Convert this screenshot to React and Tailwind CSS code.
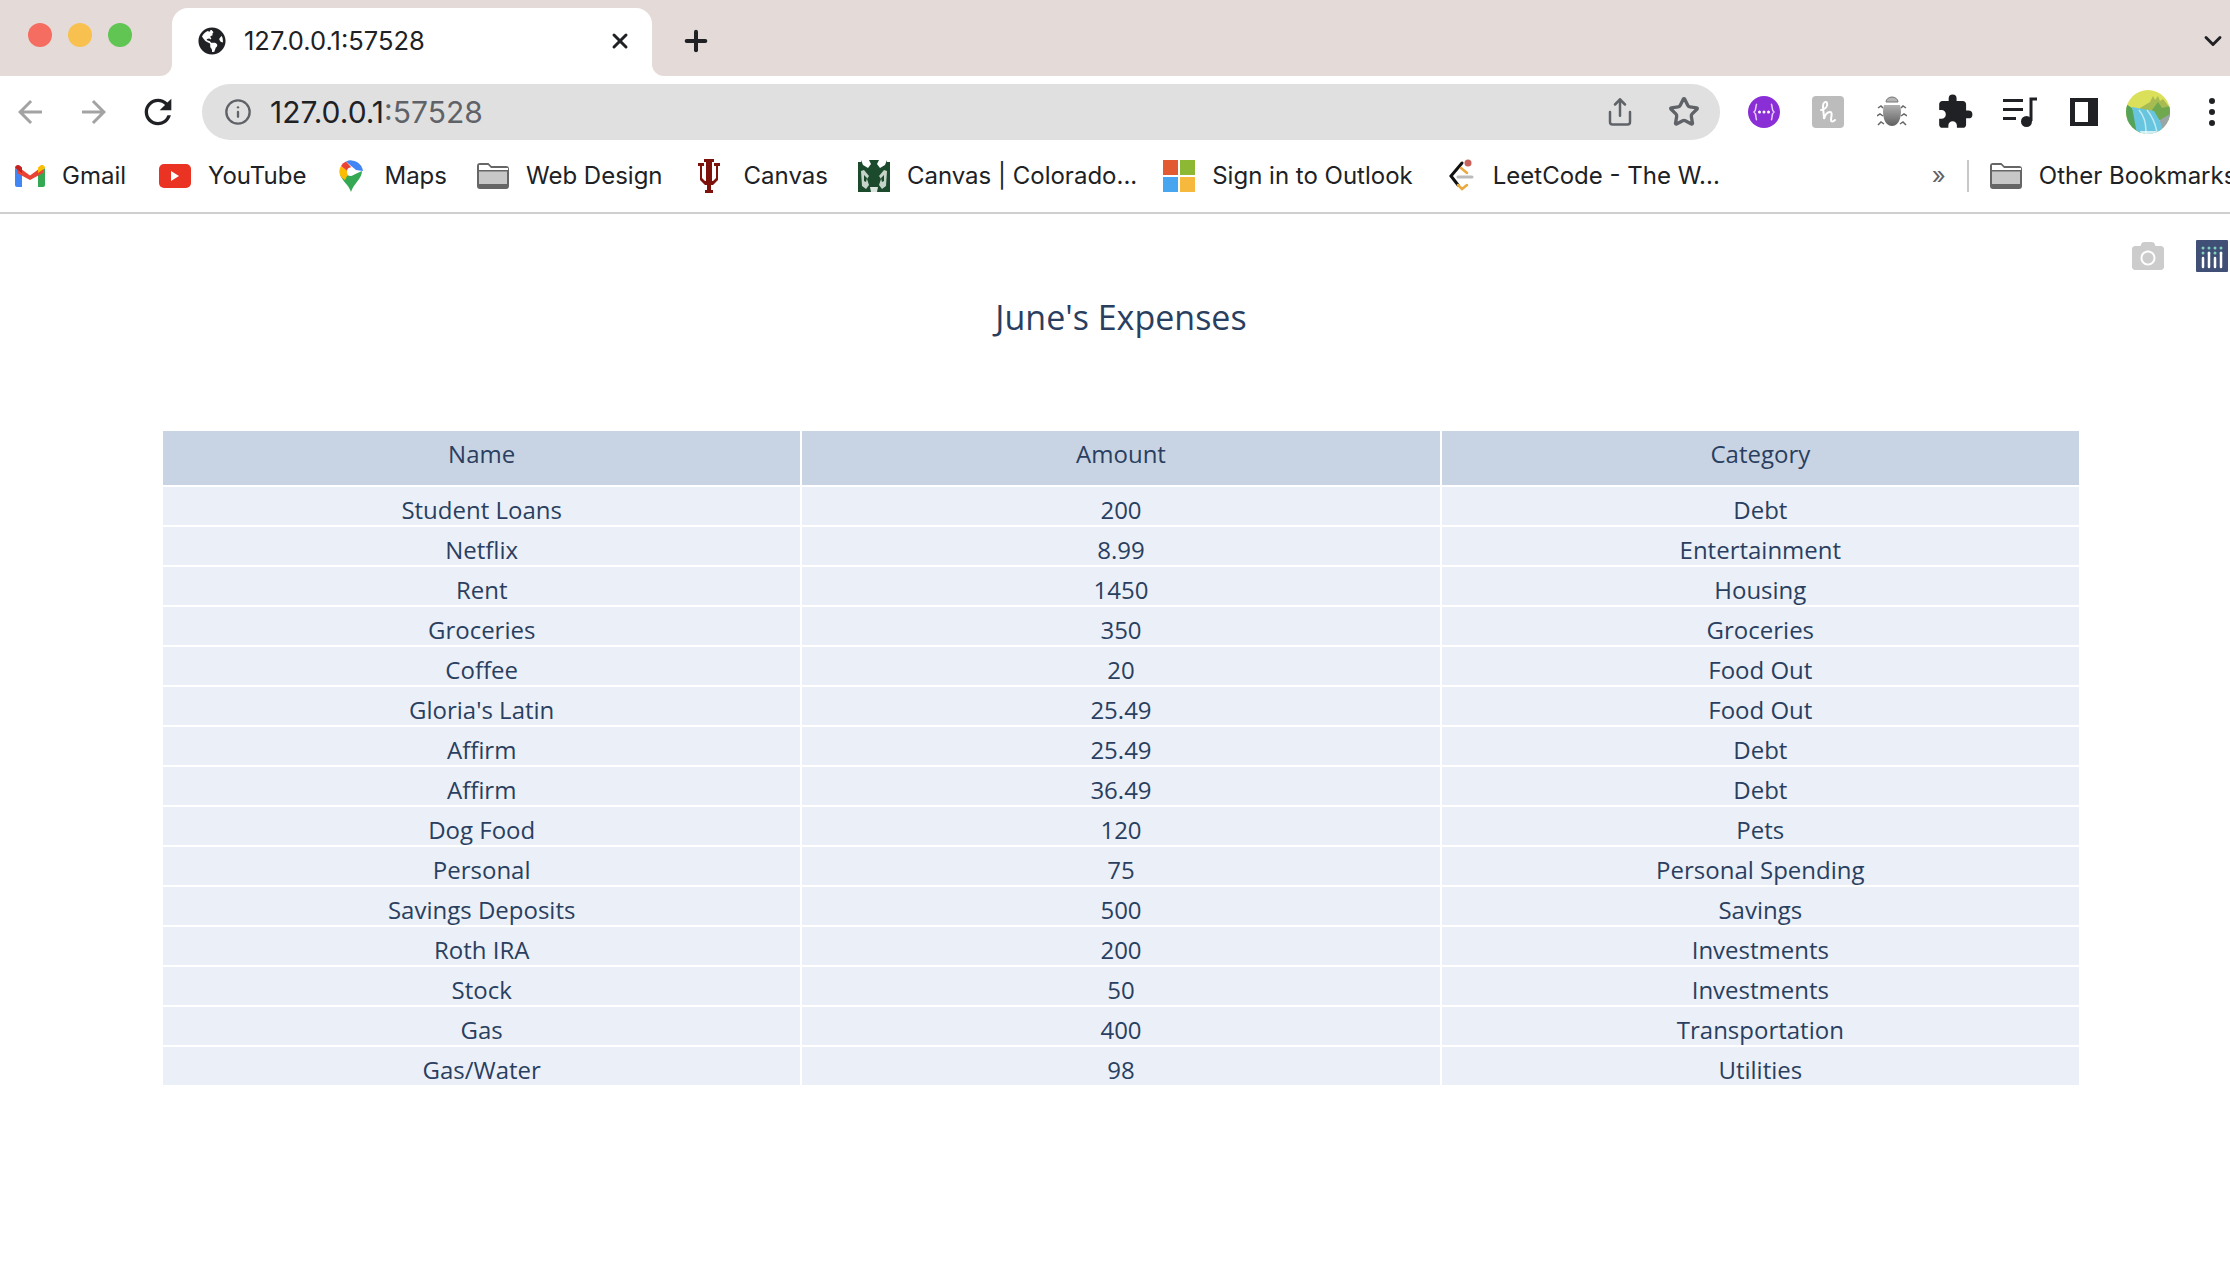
import React from 'react';
import { X, Plus, ChevronDown, Info, Share, Star } from 'lucide-react';
import { FaGlobeAmericas, FaCamera } from 'react-icons/fa';
import { MdArrowBack, MdArrowForward, MdRefresh, MdExtension } from 'react-icons/md';

const rows = [
  ['Student Loans', '200', 'Debt'],
  ['Netflix', '8.99', 'Entertainment'],
  ['Rent', '1450', 'Housing'],
  ['Groceries', '350', 'Groceries'],
  ['Coffee', '20', 'Food Out'],
  ["Gloria's Latin", '25.49', 'Food Out'],
  ['Affirm', '25.49', 'Debt'],
  ['Affirm', '36.49', 'Debt'],
  ['Dog Food', '120', 'Pets'],
  ['Personal', '75', 'Personal Spending'],
  ['Savings Deposits', '500', 'Savings'],
  ['Roth IRA', '200', 'Investments'],
  ['Stock', '50', 'Investments'],
  ['Gas', '400', 'Transportation'],
  ['Gas/Water', '98', 'Utilities'],
];

const GmailIcon = () => (
  <svg width="30" height="22" viewBox="0 0 30 22">
    <path fill="#4285f4" d="M0 3v17a2 2 0 0 0 2 2h5V8z" />
    <path fill="#34a853" d="M30 3v17a2 2 0 0 1-2 2h-5V8z" />
    <path fill="#ea4335" d="M2 1l13 9.500L28 1v7l-13 7L2 8z" />
    <path fill="#c5221f" d="M0 3a3 3 0 0 1 5-2.200L7 2.500V8L0 3z" />
    <path fill="#fbbc04" d="M30 3a3 3 0 0 0-5-2.200L23 2.500V8l7-5z" />
  </svg>
);

const YoutubeIcon = () => (
  <div className="flex h-[24px] w-[32px] items-center justify-center rounded-[5px] bg-[#ea3323]">
    <div className="h-0 w-0 border-y-[5px] border-l-[8px] border-y-transparent border-l-white" />
  </div>
);

const MapsIcon = () => (
  <svg width="24" height="32" viewBox="0 0 24 32">
    <path fill="#34a853" d="M12 32C10 25 2 20 1 14l11 2 11-5c0 8-9 13-11 21z" />
    <path fill="#fbbc04" d="M1 15c-1-3-1-6 1-9l8 6-4 8c-2-1-4-3-5-5z" />
    <path fill="#ea4335" d="M2 6a11 11 0 0 1 5-4.500l5 5.500-3 4.500z" />
    <path fill="#4285f4" d="M7 1.500A12 12 0 0 1 24 11l-7-1-6-5z" />
    <circle cx="12" cy="11.500" r="4" fill="#fff" />
  </svg>
);

const FolderIcon = () => (
  <svg width="32" height="26" viewBox="0 0 32 26">
    <path fill="#c8c8c8" stroke="#666" strokeWidth="2" d="M1 3a2 2 0 0 1 2-2h8l3 3h15a2 2 0 0 1 2 2v17a2 2 0 0 1-2 2H3a2 2 0 0 1-2-2z" />
    <path fill="#fff" d="M2 2h9l3 3h17v2H2z" />
    <path fill="#666" d="M1 7h30v1.500H1zM1 21h30v4H1z" />
  </svg>
);

const IuIcon = () => (
  <svg width="26" height="34" viewBox="0 0 26 34">
    <path fill="#7d110c" d="M8 0h10v3h-2v19h1l3-3V7h-2V4h6v3h-2v14l-5 5h-2v5h2v3H9v-3h2v-5H9l-5-5V7H2V4h6v3H6v12l3 3h1V3H8z" />
  </svg>
);

const RamIcon = () => (
  <svg width="32" height="32" viewBox="0 0 32 32">
    <rect width="32" height="32" fill="#1b4a2c" />
    <path fill="#fff" d="M3 0h8l2 4-3 4-5-3zM21 0h8l-2 5-5 3-3-4z" />
    <path fill="#fff" d="M0 0h3v2H0zM29 0h3v2h-3z" />
    <path fill="#c5d3c9" d="M3 11l3-1 5 6-2 3 2 6-3 4-4-3zM29 11l-3-1-5 6 2 3-2 6 3 4 4-3z" />
    <path fill="#1b4a2c" d="M6 15l3 3-1 4-2-1zM26 15l-3 3 1 4 2-1z" />
    <path fill="#dbe4dd" d="M12 27h8l-1 5h-6z" />
  </svg>
);

const MsIcon = () => (
  <div className="grid h-[32px] w-[32px] grid-cols-2 gap-[1.500px]">
    <div className="bg-[#e25a32]" />
    <div className="bg-[#8cb833]" />
    <div className="bg-[#47a6ef]" />
    <div className="bg-[#f6b93d]" />
  </div>
);

const LeetIcon = () => (
  <svg width="28" height="34" viewBox="0 0 28 34">
    <circle cx="20" cy="4" r="3.500" fill="#c9625a" />
    <path fill="none" stroke="#111" strokeWidth="3" strokeLinecap="round" d="M14 4L3 17l7 9" />
    <path fill="none" stroke="#eba83f" strokeWidth="2.500" strokeLinecap="round" d="M13 9l6 5M10 26l4 4 5-4" />
    <path fill="none" stroke="#bbb" strokeWidth="3" strokeLinecap="round" d="M10 18h14" />
  </svg>
);

const PurpleIcon = () => (
  <svg width="32" height="32" viewBox="0 0 32 32">
    <circle cx="16" cy="16" r="16" fill="#8a2fd6" />
    <path fill="none" stroke="#e6ccf8" strokeWidth="1.500" d="M9 8c-2 1 0 6-3 8 3 2 1 7 3 8M23 8c2 1 0 6 3 8-3 2-1 7-3 8" />
    <circle cx="11.500" cy="16" r="1.500" fill="#fff" />
    <circle cx="16" cy="16" r="1.500" fill="#fff" />
    <circle cx="20.500" cy="16" r="1.500" fill="#fff" />
  </svg>
);

const HoneyIcon = () => (
  <svg width="32" height="32" viewBox="0 0 32 32">
    <rect width="32" height="32" rx="4" fill="#bcbcbc" />
    <path fill="none" stroke="#fff" strokeWidth="2" strokeLinecap="round" d="M9 14c5-1 7-4 6-7-1-2-4-1-4 3 0 4 1 9 1 13 1-4 3-7 6-7 3 0 1 5 1 8 0 2 2 2 4 0" />
  </svg>
);

const BugIcon = () => (
  <svg width="30" height="32" viewBox="0 0 30 32">
    <defs>
      <linearGradient id="bug" x1="0" y1="0" x2="0" y2="1">
        <stop offset="0" stopColor="#b0b0b0" />
        <stop offset="1" stopColor="#5f5f5f" />
      </linearGradient>
    </defs>
    <path fill="#b5b5b5" stroke="#777" d="M9 6a6 5 0 0 1 12 0z" />
    <path fill="url(#bug)" d="M7 9h16c2 6 1 15-3 19a7 7 0 0 1-10 0C6 24 5 15 7 9z" />
    <path fill="none" stroke="#666" strokeWidth="1.500" d="M1 12l3-2 2 2M24 12l2-2 3 2M0 20l3-2 3 2M24 20l3-2 3 2M1 29l3-3 3 2M23 28l3-2 3 3" />
  </svg>
);

const QueueIcon = () => (
  <svg width="34" height="32" viewBox="0 0 34 32">
    <path fill="#202124" d="M0 3h20v3H0zM0 12h20v3H0zM0 21h13v3H0z" />
    <path fill="none" stroke="#202124" strokeWidth="3" d="M28 25V3h6" />
    <circle cx="23.500" cy="25.500" r="5.500" fill="#202124" />
  </svg>
);

const AvatarIcon = () => (
  <svg width="44" height="44" viewBox="0 0 44 44">
    <clipPath id="avatar">
      <circle cx="22" cy="22" r="22" />
    </clipPath>
    <g clipPath="url(#avatar)">
      <rect width="44" height="44" fill="#dbe05b" />
      <path fill="#a6bb52" d="M14 18l10-6 3-6 2 4 3-4 2 5 3-2 7 9v6H14z" />
      <path fill="#6fa84e" d="M26 20l6-8 4 6 8-2v14H30z" />
      <path fill="#9aa5a8" d="M44 24v20H32l2-14z" />
      <path fill="#55a35a" d="M0 14l6 4 4 8 6 18H0z" />
      <path fill="#68c5df" d="M6 17l22 4 6 10 4 13H11z" />
      <path fill="none" stroke="#bfe9f2" strokeWidth="1.500" d="M13 20c5 6 7 12 7 24M21 20c5 6 8 12 10 22" />
      <path fill="#fff" d="M14 41h16v3H14z" opacity=".7" />
    </g>
  </svg>
);

const PlotlyLogo = () => (
  <svg width="32" height="32" viewBox="0 0 32 32">
    <rect width="32" height="32" rx="1" fill="#3f4f75" />
    <g fill="#80cfbe">
      <circle cx="7" cy="8" r="1.500" />
      <circle cx="13" cy="8" r="1.500" />
      <circle cx="19" cy="8" r="1.500" />
      <circle cx="25" cy="8" r="1.500" />
      <circle cx="7" cy="13" r="1.500" />
      <circle cx="13" cy="13" r="1.500" />
      <circle cx="19" cy="13" r="1.500" />
      <circle cx="25" cy="13" r="1.500" />
    </g>
    <path fill="none" stroke="#fff" strokeWidth="2.500" strokeLinecap="round" d="M7 27V18M13 27V13M19 27V18M25 27V13" />
  </svg>
);

const Bookmark = ({ icon, label, className = 'gap-[17px] mr-[33px]' }) => (
  <div className={`flex shrink-0 items-center ${className}`}>
    <div className="flex h-[34px] items-center">{icon}</div>
    <span>{label}</span>
  </div>
);

const Cell = ({ children, bg }) => (
  <div className={`h-full overflow-hidden pt-[10px] text-center leading-[26px] ${bg}`}>{children}</div>
);

const App = () => (
  <div className="h-[1282px] w-[2230px] overflow-hidden bg-white font-['Inter',sans-serif]">
    {/* tab strip */}
    <div className="flex h-[76px] items-end bg-[#e4dbd9]">
      <div className="flex h-[70px] w-[172px] items-center gap-4 self-start pl-7">
        <div className="h-6 w-6 rounded-full bg-[#f46d60]" />
        <div className="h-6 w-6 rounded-full bg-[#f7c04f]" />
        <div className="h-6 w-6 rounded-full bg-[#61c554]" />
      </div>
      <div className="relative flex h-[68px] w-[480px] items-center rounded-t-[16px] bg-white pb-[2px] pl-[26px] pr-[20px]">
        <div className="absolute bottom-0 left-[-12px] h-3 w-3 bg-white">
          <div className="h-full w-full rounded-br-[12px] bg-[#e4dbd9]" />
        </div>
        <div className="absolute bottom-0 right-[-12px] h-3 w-3 bg-white">
          <div className="h-full w-full rounded-bl-[12px] bg-[#e4dbd9]" />
        </div>
        <FaGlobeAmericas size={28} className="text-[#202124]" />
        <span className="ml-[18px] text-[25.500px] text-[#202124]">127.0.0.1:57528</span>
        <X size={24} strokeWidth={3} className="ml-auto text-[#202124]" />
      </div>
      <div className="flex h-[68px] flex-1 items-center pb-[2px] pl-[28px] pr-[3px]">
        <Plus size={32} strokeWidth={3} className="text-[#202124]" />
        <ChevronDown size={28} strokeWidth={2.500} className="ml-auto text-[#202124]" />
      </div>
    </div>

    {/* toolbar */}
    <div className="flex h-[72px] items-center">
      <div className="flex w-[202px] items-center gap-[28px] pl-[12px]">
        <MdArrowBack size={36} className="text-[#a3a3a3]" />
        <MdArrowForward size={36} className="text-[#a3a3a3]" />
        <MdRefresh size={40} className="ml-[-2px] text-[#202124]" />
      </div>
      <div className="flex h-[56px] w-[1518px] items-center rounded-full bg-[#e0e0e0] pl-[22px] pr-[20px]">
        <Info size={28} strokeWidth={2} className="text-[#5f6368]" />
        <span className="ml-[18px] text-[30px] text-[#202124]">
          127.0.0.1<span className="text-[#5f6368]">:57528</span>
        </span>
        <Share size={30} strokeWidth={2} className="ml-auto mr-[33px] text-[#5f6368]" />
        <Star size={32} strokeWidth={2.500} className="text-[#5f6368]" />
      </div>
      <div className="grid flex-1 grid-cols-[64px_64px_63px_64px_65px_64px_64px_auto] items-center justify-items-center pl-[12px]">
        <PurpleIcon />
        <HoneyIcon />
        <BugIcon />
        <MdExtension size={38} className="text-[#202124]" />
        <QueueIcon />
        <div className="h-[28px] w-[28px] border-y-[4px] border-l-[5px] border-r-[10px] border-[#202124] bg-white" />
        <AvatarIcon />
        <div className="ml-[14px] flex flex-col gap-[5px]">
          <div className="h-[6px] w-[6px] rounded-full bg-[#202124]" />
          <div className="h-[6px] w-[6px] rounded-full bg-[#202124]" />
          <div className="h-[6px] w-[6px] rounded-full bg-[#202124]" />
        </div>
      </div>
    </div>

    {/* bookmarks bar */}
    <div className="flex h-[66px] items-start overflow-hidden border-b-2 border-[#cfcfcf] pl-[15px] text-[24px] text-[#202124]">
      <div className="flex h-[56px] items-center">
        <Bookmark icon={<GmailIcon />} label="Gmail" />
        <Bookmark icon={<YoutubeIcon />} label="YouTube" />
        <Bookmark icon={<MapsIcon />} label="Maps" className="mr-[30px] gap-[21px]" />
        <Bookmark icon={<FolderIcon />} label="Web Design" />
        <Bookmark icon={<IuIcon />} label="Canvas" className="mr-[30px] gap-[22px]" />
        <Bookmark icon={<RamIcon />} label="Canvas | Colorado..." className="mr-[26px] gap-[17px]" />
        <Bookmark icon={<MsIcon />} label="Sign in to Outlook" className="mr-[35px] gap-[17px]" />
        <Bookmark icon={<LeetIcon />} label="LeetCode - The W..." className="mr-[212px] gap-[17px]" />
        <span className="mr-[21px] shrink-0 text-[#5f6368]">»</span>
        <div className="mr-[21px] h-[32px] w-[2px] shrink-0 bg-[#c8c8c8]" />
        <Bookmark icon={<FolderIcon />} label="Other Bookmarks" className="gap-[17px]" />
      </div>
    </div>

    {/* plotly chart */}
    <div className="relative pl-[163px] font-['Open_Sans',sans-serif] text-[#2a3f5f]">
      <div className="absolute right-[2px] top-[26px] flex items-center gap-[32px]">
        <FaCamera size={32} className="text-[#cccccc]" />
        <PlotlyLogo />
      </div>
      <div className="w-[1916px]">
        <h1 className="pt-[80px] text-center text-[34px] leading-[46px]">June's Expenses</h1>
        <div className="mt-[91px] text-[24px]">
          <div className="grid h-[54px] grid-cols-3 gap-x-[2px]">
            <Cell bg="bg-[#c8d4e3]">Name</Cell>
            <Cell bg="bg-[#c8d4e3]">Amount</Cell>
            <Cell bg="bg-[#c8d4e3]">Category</Cell>
          </div>
          <div className="mt-[2px] flex flex-col gap-y-[2px]">
            {rows.map((row, i) => (
              <div key={i} className="grid h-[38px] grid-cols-3 gap-x-[2px]">
                {row.map((value, j) => (
                  <Cell key={j} bg="bg-[#ebf0f8]">{value}</Cell>
                ))}
              </div>
            ))}
          </div>
        </div>
      </div>
    </div>
  </div>
);

export default App;
